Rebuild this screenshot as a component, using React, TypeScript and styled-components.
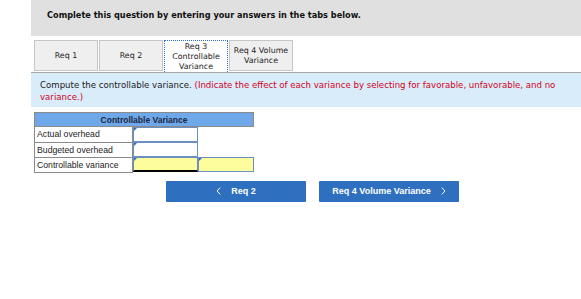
import React from "react";
import styled, { createGlobalStyle } from "styled-components";

const GlobalStyle = createGlobalStyle`
  html, body { margin: 0; padding: 0; background: #ffffff; }
  body { font-family: "DejaVu Sans", Verdana, sans-serif; }
`;

const Page = styled.div`
  padding-left: 31px;
  width: 550px;
`;

const Header = styled.div`
  background: #e0e0e0;
  height: 36px;
  box-sizing: border-box;
  padding: 10px 0 0 16px;
  font-family: "DejaVu Sans", Verdana, sans-serif;
  font-weight: bold;
  font-size: 8.2px;
  color: #111;
`;

const TabRow = styled.div`
  display: flex;
  gap: 1px;
  padding-left: 3px;
  margin-top: 4px;
  position: relative;
  z-index: 1;
`;

const Tab = styled.div<{ $active?: boolean }>`
  width: 64px;
  height: ${(p) => (p.$active ? 32 : 31)}px;
  box-sizing: border-box;
  display: flex;
  align-items: center;
  justify-content: center;
  text-align: center;
  font-family: "DejaVu Sans", Verdana, sans-serif;
  font-size: 7.9px;
  line-height: 10px;
  color: #222;
  background: ${(p) => (p.$active ? "#ffffff" : "#efefef")};
  border: ${(p) => (p.$active ? "1px dotted #2d6fd0" : "1px solid #c6c6c6")};
  border-bottom: ${(p) => (p.$active ? "none" : "1px solid #c6c6c6")};
  padding-top: ${(p) => (p.$active ? "1px" : "0")};
`;

const Panel = styled.div`
  background: #d9ecfa;
  border-top: 1px solid #a8a8a8;
  padding: 7px 12px 0 9px;
  font-family: "DejaVu Sans", Verdana, sans-serif;
  font-size: 8.6px;
  line-height: 11.5px;
  color: #222;
  height: 35px;
  box-sizing: border-box;
`;

const Red = styled.span`
  color: #d0021b;
`;

const Table = styled.table`
  border-collapse: collapse;
  table-layout: fixed;
  width: 219px;
  margin: 5px 0 0 3px;
  font-family: "Liberation Sans", Arial, sans-serif;
  font-size: 8.7px;
  color: #222;
`;

const HeadCell = styled.th`
  background: #6fa8e8;
  border: 1px solid #8a8a8a;
  height: 13px;
  padding: 0;
  font-weight: bold;
  font-size: 8.5px;
  color: #1c2a44;
  text-align: center;
`;

const LabelCell = styled.td`
  height: 14px;
  padding: 0 0 0 2px;
  border: 1px solid #8a8a8a;
  background: #fff;
  white-space: nowrap;
  overflow: hidden;
`;

const InputCell = styled.td`
  height: 14px;
  padding: 0;
  border: none;
`;

const InputBox = styled.div<{ $yellow?: boolean; $underline?: boolean }>`
  position: relative;
  box-sizing: border-box;
  height: 15px;
  background: ${(p) => (p.$yellow ? "#fdfd9e" : "#ffffff")};
  border: 1.5px solid #6c8fc2;
  border-bottom: ${(p) => (p.$underline ? "2px solid #000" : "1.5px solid #6c8fc2")};
  &::before {
    content: "";
    position: absolute;
    left: 0;
    top: 0;
    border-top: 3px solid #2a6fd6;
    border-right: 3px solid transparent;
  }
`;

const ButtonRow = styled.div`
  display: flex;
  gap: 13px;
  margin: 8px 0 0 135px;
`;

const NavButton = styled.div`
  width: 140px;
  height: 21px;
  background: #2f6fbf;
  border-radius: 1px;
  color: #fff;
  font-family: "Liberation Sans", Arial, sans-serif;
  font-weight: bold;
  font-size: 9px;
  display: flex;
  align-items: center;
  justify-content: center;
  gap: 10px;
`;

const Chevron = styled.svg`
  width: 5px;
  height: 8px;
  flex: none;
`;

const ChevronLeft = () => (
  <Chevron viewBox="0 0 5 8">
    <path d="M4.2 0.6 L1 4 L4.2 7.4" fill="none" stroke="#fff" strokeWidth="1" />
  </Chevron>
);

const ChevronRight = () => (
  <Chevron viewBox="0 0 5 8">
    <path d="M0.8 0.6 L4 4 L0.8 7.4" fill="none" stroke="#fff" strokeWidth="1" />
  </Chevron>
);

export default function App() {
  return (
    <>
      <GlobalStyle />
      <Page>
        <Header>Complete this question by entering your answers in the tabs below.</Header>
        <TabRow>
          <Tab>Req 1</Tab>
          <Tab>Req 2</Tab>
          <Tab $active>
            Req 3<br />Controllable<br />Variance
          </Tab>
          <Tab>
            Req 4 Volume<br />Variance
          </Tab>
        </TabRow>
        <Panel>
          Compute the controllable variance.{" "}
          <Red>(Indicate the effect of each variance by selecting for favorable, unfavorable, and no variance.)</Red>
        </Panel>
        <Table>
          <colgroup>
            <col style={{ width: 98 }} />
            <col style={{ width: 65 }} />
            <col style={{ width: 56 }} />
          </colgroup>
          <thead>
            <tr>
              <HeadCell colSpan={3}>Controllable Variance</HeadCell>
            </tr>
          </thead>
          <tbody>
            <tr>
              <LabelCell>Actual overhead</LabelCell>
              <InputCell><InputBox /></InputCell>
              <InputCell />
            </tr>
            <tr>
              <LabelCell>Budgeted overhead</LabelCell>
              <InputCell><InputBox /></InputCell>
              <InputCell />
            </tr>
            <tr>
              <LabelCell>Controllable variance</LabelCell>
              <InputCell><InputBox $yellow $underline /></InputCell>
              <InputCell><InputBox $yellow /></InputCell>
            </tr>
          </tbody>
        </Table>
        <ButtonRow>
          <NavButton>
            <ChevronLeft /> Req 2
          </NavButton>
          <NavButton>
            Req 4 Volume Variance <ChevronRight />
          </NavButton>
        </ButtonRow>
      </Page>
    </>
  );
}
